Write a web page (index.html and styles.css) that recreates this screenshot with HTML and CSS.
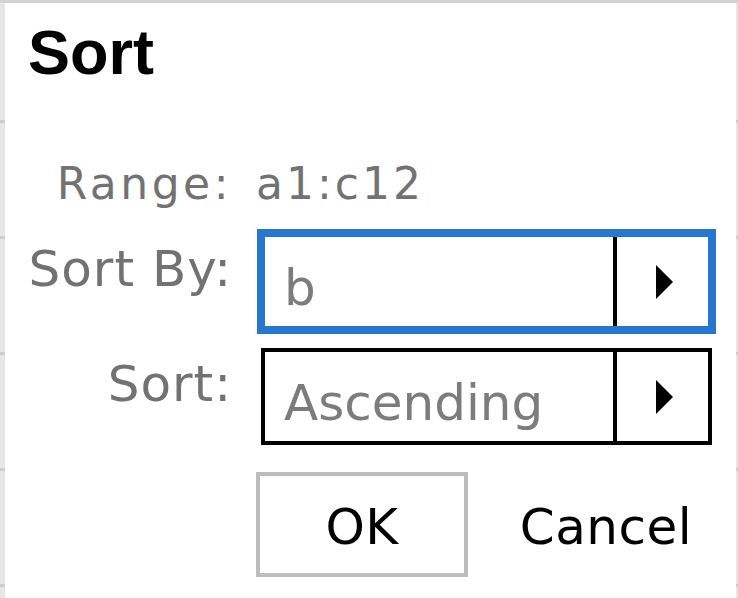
FILE: index.html
```html
<!DOCTYPE html>
<html lang="en">
<head>
<meta charset="utf-8">
<title>Sort</title>
<link rel="stylesheet" href="styles.css">
</head>
<body>
<div class="dialog">
  <h1 class="title">Sort</h1>
  <div class="row row-range">
    <div class="label label-small">Range:</div>
    <div class="value-text">a1:c12</div>
  </div>
  <div class="row row-sortby">
    <div class="label">Sort By:</div>
    <div class="select focused">
      <span class="select-text">b</span>
      <span class="select-btn"><svg class="arrow" width="17" height="34" viewBox="0 0 17 34"><polygon points="0,0 17,17 0,34" fill="#000"/></svg></span>
    </div>
  </div>
  <div class="row row-sort">
    <div class="label">Sort:</div>
    <div class="select">
      <span class="select-text">Ascending</span>
      <span class="select-btn"><svg class="arrow" width="17" height="34" viewBox="0 0 17 34"><polygon points="0,0 17,17 0,34" fill="#000"/></svg></span>
    </div>
  </div>
  <div class="buttons">
    <button class="btn btn-ok">OK</button>
    <button class="btn btn-cancel">Cancel</button>
  </div>
</div>
</body>
</html>
```

FILE: styles.css
```css
html, body {
  margin: 0;
  padding: 0;
}

body {
  width: 738px;
  height: 598px;
  overflow: hidden;
  background:
    linear-gradient(#d3d3d3, #d3d3d3) top left / 100% 3px no-repeat,
    repeating-linear-gradient(180deg, transparent 0, transparent 113px, #cdcdcd 113px, #cdcdcd 116px) 0 7px / 100% 100%,
    #e6e6e6;
  font-family: "DejaVu Sans", sans-serif;
}

.dialog {
  box-sizing: border-box;
  margin: 3px 0 0 5px;
  width: 731px;
  height: 595px;
  background: #fff;
}

.title {
  margin: 0;
  padding: 14px 0 0 23px;
  font-family: "Liberation Sans", Arial, sans-serif;
  font-weight: bold;
  font-size: 63px;
  line-height: 70px;
  color: #000;
}

.row {
  display: grid;
  grid-template-columns: 229px 456px;
  column-gap: 22px;
  align-items: start;
}

.row-range {
  margin-top: 72px;
}

.row-sortby {
  margin-top: 24px;
}

.row-sort {
  margin-top: 18px;
}

.label {
  text-align: right;
  font-size: 50px;
  line-height: 58px;
  padding-top: 7px;
  margin-right: 2px;
  letter-spacing: 1px;
  color: #727272;
}

.label-small {
  padding-top: 0;
  font-size: 44px;
  line-height: 50px;
  letter-spacing: 3.5px;
  margin-right: 2px;
}

.value-text {
  font-size: 44px;
  line-height: 50px;
  letter-spacing: 3px;
  color: #727272;
}

.select {
  box-sizing: border-box;
  display: flex;
  width: 451px;
  height: 97px;
  margin-left: 5px;
  border: 4px solid #000;
  background: #fff;
}

.select.focused {
  border-color: #2777d1;
  box-shadow: 0 0 0 4px #2777d1;
}

.select-text {
  flex: 1;
  padding: 22px 0 0 19px;
  font-size: 50px;
  line-height: 58px;
  color: #7c7c7c;
  white-space: nowrap;
}

.select-btn {
  width: 91px;
  border-left: 4px solid #000;
  display: flex;
  align-items: center;
  justify-content: center;
}

.arrow {
  display: block;
  margin-left: 4px;
}

.buttons {
  display: flex;
  gap: 32px;
  margin-top: 27px;
  padding-left: 251px;
}

.btn {
  box-sizing: border-box;
  width: 212px;
  height: 105px;
  margin: 0;
  padding: 4px 0 0 0;
  border: 4px solid transparent;
  background: #fff;
  color: #000;
  font-family: "DejaVu Sans", sans-serif;
  font-size: 50px;
  line-height: 58px;
  letter-spacing: 0.5px;
  text-align: center;
}

.btn-ok {
  border-color: #bdbdbd;
}
```
